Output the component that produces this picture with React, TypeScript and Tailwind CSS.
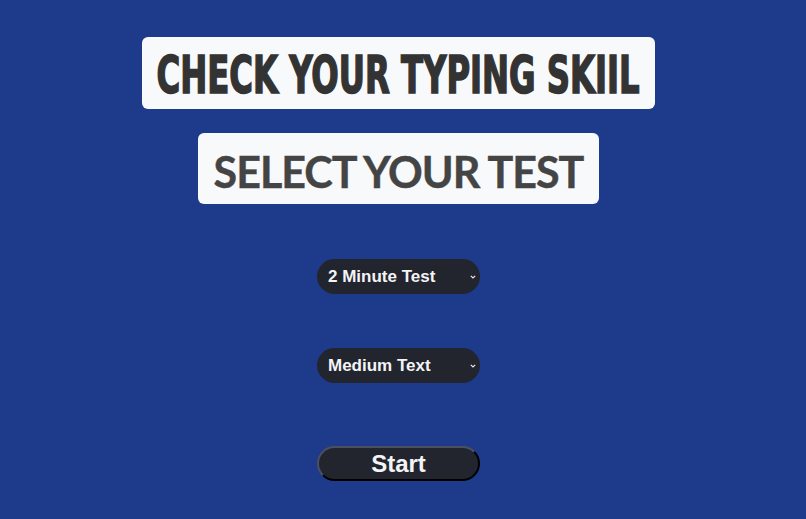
import React from 'react';

const Chevron = () => (
  <svg width="8" height="6" viewBox="0 0 8 6" className="pointer-events-none absolute right-[3px] top-1/2 -translate-y-1/2">
    <path d="M1.8 1.8 L4 4 L6.2 1.8" fill="none" stroke="#e5e7eb" strokeWidth="1.2" />
  </svg>
);

function Picker({ value, options }: { value: string; options: string[] }) {
  return (
    <div className="relative w-[163px]">
      <select
        defaultValue={value}
        className="h-[35px] w-full appearance-none rounded-full bg-[#22252e] pl-[11px] pr-6 text-[17px] font-bold text-[#f3f4f6] outline-none [font-family:'Liberation_Sans',Arial,sans-serif]"
      >
        {options.map((o) => (
          <option key={o}>{o}</option>
        ))}
      </select>
      <Chevron />
    </div>
  );
}

export default function App() {
  return (
    <div className="flex min-h-[519px] w-full flex-col items-center bg-[#1e3a8a] pr-[9px] pt-[37px]">
      <div className="flex h-[72px] w-[513px] items-center justify-center overflow-hidden rounded-[6px] bg-[#f8f9fa] pt-[4px]">
        <h1 className="scale-x-[0.69] whitespace-nowrap text-[52px] font-bold leading-none text-[#333333] [-webkit-text-stroke:1.6px_#333333] [font-family:'DejaVu_Sans_Condensed','DejaVu_Sans',sans-serif]">
          CHECK YOUR TYPING SKIIL
        </h1>
      </div>
      <div className="mt-[24px] flex h-[71px] w-[401px] items-center justify-center rounded-[6px] bg-[#f8f9fa] pt-[5px]">
        <h2 className="whitespace-nowrap text-[43px] font-bold leading-none tracking-[-1px] text-[#444444] [-webkit-text-stroke:0.4px_#444444] [font-family:Lato,sans-serif]">
          SELECT YOUR TEST
        </h2>
      </div>
      <div className="mt-[55px]">
        <Picker value="2 Minute Test" options={['1 Minute Test', '2 Minute Test', '5 Minute Test']} />
      </div>
      <div className="mt-[54px]">
        <Picker value="Medium Text" options={['Easy Text', 'Medium Text', 'Hard Text']} />
      </div>
      <button className="mt-[63px] h-[35px] w-[163px] rounded-full border-2 border-t-[#4b5060] border-l-[#4b5060] border-r-black border-b-black bg-[#22252e] text-[24px] font-bold leading-none text-[#f3f4f6] [font-family:'Liberation_Sans',Arial,sans-serif]">
        Start
      </button>
    </div>
  );
}
